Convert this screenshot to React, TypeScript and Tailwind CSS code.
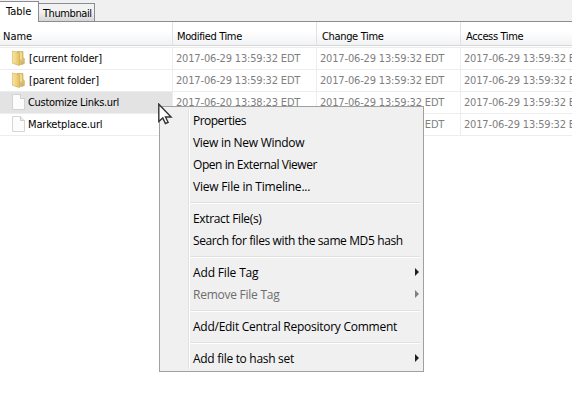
import type { ReactNode } from "react";

const tableFont = "font-['DejaVu_Sans_Condensed','DejaVu_Sans',sans-serif] [font-stretch:condensed]";

function FolderIcon() {
  return (
    <svg width="13" height="16" viewBox="0 0 13 16" className="-mt-px shrink-0">
      <defs>
        <linearGradient id="fold" x1="0" x2="1">
          <stop offset="0" stopColor="#f8e6a4" />
          <stop offset="1" stopColor="#e3c164" />
        </linearGradient>
      </defs>
      <path d="M5 1.5h6v6l1.3 1v5L10 14.5H5z" fill="#dfc068" stroke="#c7a24a" strokeWidth=".6" />
      <path d="M7.5 2.5h2.5v7H7.5z" fill="#f2dc90" />
      <path d="M.4 1l5.4 1.2 1.7 1.3V15.6L5.5 15 .4 13.2z" fill="url(#fold)" stroke="#d1aa4d" strokeWidth=".6" />
      <path d="M9.5 11.5h2V14h-2z" fill="#b4b596" />
    </svg>
  );
}

function FileIcon() {
  return (
    <svg width="13" height="16" viewBox="0 0 13 16" className="-mt-px shrink-0">
      <path d="M.5.5h8l4 4v11H.5z" fill="#fcfcfc" stroke="#cbcbcb" strokeWidth=".8" />
      <path d="M8.5.5v4h4" fill="#eee" stroke="#c2c2c2" strokeWidth=".8" />
    </svg>
  );
}

function Header({ children, className }: { children: ReactNode; className: string }) {
  return (
    <div className={`h-6 shrink-0 border-b border-b-[#d5d5d5] bg-linear-to-b from-white from-40% to-[#f1f2f4] to-100% pt-2 text-[11px] leading-[14px] text-black ${className}`}>
      {children}
    </div>
  );
}

const rows = [
  { name: "[current folder]", folder: true, modified: "2017-06-29 13:59:32 EDT", track: "tracking-[-0.14px]" },
  { name: "[parent folder]", folder: true, modified: "2017-06-29 13:59:32 EDT", track: "tracking-[-0.14px]" },
  { name: "Customize Links.url", folder: false, modified: "2017-06-20 13:38:23 EDT", track: "tracking-[-0.3px]", selected: true },
  { name: "Marketplace.url", folder: false, modified: "2017-06-29 13:59:32 EDT", track: "tracking-[-0.16px]" },
];

function TimeCell({ children, last }: { children: string; last?: boolean }) {
  return (
    <div className={`shrink-0 pl-[3px] text-[11px] leading-[21px] tracking-[-0.17px] whitespace-nowrap text-[#808080] ${last ? "w-28" : "w-36 border-r border-[#ededed]"}`}>
      {children}
    </div>
  );
}

const groups = [
  [
    { label: "Properties", track: "tracking-[-0.52px]" },
    { label: "View in New Window", track: "tracking-[-0.28px]" },
    { label: "Open in External Viewer", track: "tracking-[-0.45px]" },
    { label: "View File in Timeline...", track: "tracking-[-0.2px]" },
  ],
  [
    { label: "Extract File(s)", track: "tracking-[-0.35px]" },
    { label: "Search for files with the same MD5 hash", track: "tracking-[-0.38px]" },
  ],
  [
    { label: "Add File Tag", track: "tracking-[-0.15px]", sub: true },
    { label: "Remove File Tag", track: "tracking-[-0.25px]", sub: true, disabled: true },
  ],
  [{ label: "Add/Edit Central Repository Comment", track: "tracking-[-0.26px]" }],
  [{ label: "Add file to hash set", track: "tracking-[-0.3px]", sub: true }],
] as { label: string; track: string; sub?: boolean; disabled?: boolean }[][];

function ContextMenu() {
  return (
    <div className="absolute top-[106px] left-[159px] flex h-[266px] w-[265px] border border-[#a0a0a0] bg-[#f0f0f0] py-[3px] font-['Open_Sans','Noto_Sans',sans-serif] [font-stretch:normal]">
      <div className="-mt-px h-[260px] w-[29px] shrink-0 border-r border-[#e2e2e2]" />
      <div className="-mt-px h-[260px] w-px shrink-0 bg-white" />
      <div className="w-[230px]">
        {groups.map((items, g) => (
          <div key={g}>
            {g > 0 && (
              <div className="h-[10px] pt-1">
                <div className="h-[2px] border-b border-white bg-[#e0e0e0]" />
              </div>
            )}
            {items.map((item) => (
              <div key={item.label} className={`flex h-[22px] items-center justify-between pl-[3px] text-[12px] leading-[22px] whitespace-nowrap ${item.disabled ? "text-[#6d6d6d]" : "text-black"}`}>
                <span className={item.track}>{item.label}</span>
                {item.sub && (
                  <svg width="4" height="8" viewBox="0 0 4 8" className={`-mt-[3px] mr-px ${item.disabled ? "fill-[#808080]" : "fill-[#202020]"}`}>
                    <path d="M0 0l4 4-4 4z" />
                  </svg>
                )}
              </div>
            ))}
          </div>
        ))}
      </div>
    </div>
  );
}

export default function App() {
  return (
    <div className={`relative h-[411px] w-[572px] overflow-hidden bg-white ${tableFont}`}>
      <div className="flex h-[22px] border-b border-[#898c95] bg-[#f0f0f0] text-[11px] leading-[14px] whitespace-nowrap text-black">
        <div className="mt-px h-[21px] w-[39px] border-t border-r border-[#898c95] bg-white pt-[3px] pl-1.5 shadow-[0_1px_0_white]">
          <span className="tracking-[0px]">Table</span>
        </div>
        <div className="mt-[3px] h-[18px] w-14 border-t border-r border-[#898c95] bg-linear-to-b from-[#f2f2f2] from-45% to-[#d5d5d5] pt-[3px] pl-1">
          <span className="tracking-[-0.42px]">Thumbnail</span>
        </div>
      </div>
      <div className="flex w-[572px] border-b border-[#ededed] pb-px">
        <Header className="w-[173px] border-r border-r-[#e2e2e2] pl-[3px]">Name</Header>
        <Header className="w-36 border-r border-r-[#e2e2e2] pl-1 tracking-[-0.36px]">Modified Time</Header>
        <Header className="w-36 border-r border-r-[#e2e2e2] pl-[5px] tracking-[-0.34px]">Change Time</Header>
        <Header className="w-[111px] pl-[5px] tracking-[-0.36px]">Access Time</Header>
      </div>
      {rows.map((row) => (
        <div key={row.name} className="flex h-[22px] w-[573px] border-b border-[#ededed]">
          <div className={`flex w-[173px] shrink-0 items-center border-r border-[#ededed] pl-3 text-[11px] leading-[21px] text-black ${row.selected ? "bg-[#e3e3e3]" : ""}`}>
            {row.folder ? <FolderIcon /> : <FileIcon />}
            <span className={`${row.folder ? "ml-1" : "ml-[3px]"} ${row.track}`}>{row.name}</span>
          </div>
          <TimeCell>{row.modified}</TimeCell>
          <TimeCell>2017-06-29 13:59:32 EDT</TimeCell>
          <TimeCell last>2017-06-29 13:59:32 EDT</TimeCell>
        </div>
      ))}
      <ContextMenu />
      <svg width="15" height="22" viewBox="0 0 15 22" className="absolute top-[103px] left-[158px]">
        <path d="M.8 1.2v17.3l4-3.6 2.6 5.6 2.7-1.2-2.6-5.3h5.6z" fill="white" stroke="#333" strokeWidth="1.4" />
      </svg>
    </div>
  );
}
